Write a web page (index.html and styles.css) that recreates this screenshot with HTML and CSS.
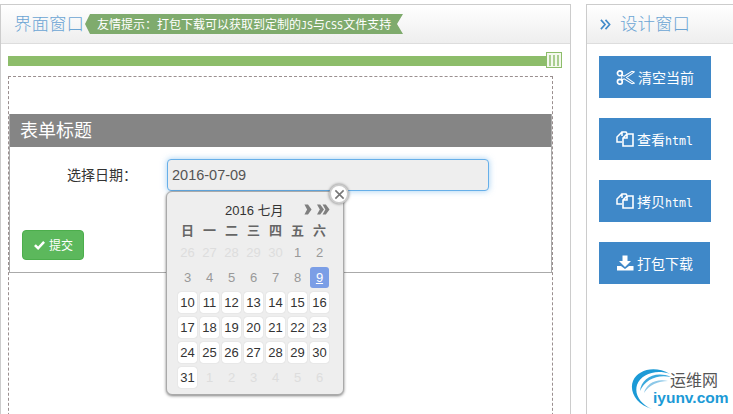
FILE: index.html
```html
<!DOCTYPE html>
<html lang="zh">
<head>
<meta charset="utf-8">
<title>界面窗口</title>
<link rel="stylesheet" href="styles.css">
</head>
<body>
<div class="page">
  <main class="panel main-panel">
    <header class="panel-head">
      <h2 class="panel-title">界面窗口</h2>
      <div class="ribbon">友情提示：打包下载可以获取到定制的<span class="mono-sm">JS</span>与<span class="mono-sm">CSS</span>文件支持</div>
    </header>
    <div class="panel-body">
      <div class="slider">
        <div class="slider-bar"></div>
        <div class="slider-handle"><i></i><i></i><i></i></div>
      </div>
      <div class="canvas">
        <section class="form-box">
          <h3 class="form-title">表单标题</h3>
          <div class="form-row">
            <label class="form-label">选择日期：</label>
            <div class="input">2016-07-09</div>
          </div>
          <div class="form-actions">
            <button class="submit">
              <svg class="check" viewBox="0 0 14 12" width="13" height="11"><path d="M1 6.5 L3 4.5 L5.5 7 L11 1 L13 3 L5.5 11 Z" fill="#fff"/></svg>
              <span>提交</span>
            </button>
          </div>
        </section>
      </div>
    </div>
    <div class="calendar">
      <div class="close">
        <svg viewBox="0 0 12 12" width="11" height="11"><path d="M1.5 1.5 L10.5 10.5 M10.5 1.5 L1.5 10.5" stroke="#777" stroke-width="1.7" fill="none"/></svg>
      </div>
      <div class="cal-title">
        <span class="cal-month">2016 七月</span>
        <span class="cal-nav">
          <svg viewBox="0 0 9 12" width="8" height="13"><path d="M0.5 0.5 H4.5 L8.5 6 L4.5 11.5 H0.5 L3.5 6 Z" fill="#7f7f7f"/></svg>
          <svg viewBox="0 0 14 12" width="13" height="13"><path d="M0 0.5 H3.5 L7.5 6 L3.5 11.5 H0 L3 6 Z M6 0.5 H9.5 L13.5 6 L9.5 11.5 H6 L9 6 Z" fill="#7f7f7f"/></svg>
        </span>
      </div>
      <div class="cal-week">
        <span>日</span><span>一</span><span>二</span><span>三</span><span>四</span><span>五</span><span>六</span>
      </div>
      <div class="cal-grid">
        <span class="off">26</span><span class="off">27</span><span class="off">28</span><span class="off">29</span><span class="off">30</span><span class="past">1</span><span class="past">2</span>
        <span class="past">3</span><span class="past">4</span><span class="past">5</span><span class="past">6</span><span class="past">7</span><span class="past">8</span><span class="today">9</span>
        <span class="day">10</span><span class="day">11</span><span class="day">12</span><span class="day">13</span><span class="day">14</span><span class="day">15</span><span class="day">16</span>
        <span class="day">17</span><span class="day">18</span><span class="day">19</span><span class="day">20</span><span class="day">21</span><span class="day">22</span><span class="day">23</span>
        <span class="day">24</span><span class="day">25</span><span class="day">26</span><span class="day">27</span><span class="day">28</span><span class="day">29</span><span class="day">30</span>
        <span class="day">31</span><span class="off">1</span><span class="off">2</span><span class="off">3</span><span class="off">4</span><span class="off">5</span><span class="off">6</span>
      </div>
    </div>
  </main>
  <aside class="panel side-panel">
    <header class="panel-head side-head">
      <svg class="chevrons" viewBox="0 0 12 12" width="11" height="11"><path d="M1 1 L5.5 6 L1 11 M6 1 L10.5 6 L6 11" stroke="#428bca" stroke-width="1.8" fill="none"/></svg>
      <h2 class="panel-title">设计窗口</h2>
    </header>
    <div class="side-body">
      <a class="tool">
        <svg class="tool-icon" viewBox="0 0 20 16" width="19" height="15"><circle cx="4" cy="3.5" r="2.6" fill="none" stroke="#fff" stroke-width="1.8"/><circle cx="4" cy="12.5" r="2.6" fill="none" stroke="#fff" stroke-width="1.8"/><path d="M6 5 L8.5 6.5 L17 1.5 L19.5 2 L11 8 L19.5 14 L17 14.5 L8.5 9.5 L6 11 Z" fill="none" stroke="#fff" stroke-width="1.1"/></svg>
        <span>清空当前</span>
      </a>
      <a class="tool">
        <svg class="tool-icon" viewBox="0 0 18 16" width="18" height="16"><path d="M6 5 V1 H10 L11 2.5 M6 1 L1 6 V11 H6" stroke="#fff" stroke-width="1.5" fill="none"/><path d="M7 15 V7 L11 3 H17 V15 Z M7 7 H11 V3" stroke="#fff" stroke-width="1.6" fill="none"/></svg>
        <span>查看<span class="mono">html</span></span>
      </a>
      <a class="tool">
        <svg class="tool-icon" viewBox="0 0 18 16" width="18" height="16"><path d="M6 5 V1 H10 L11 2.5 M6 1 L1 6 V11 H6" stroke="#fff" stroke-width="1.5" fill="none"/><path d="M7 15 V7 L11 3 H17 V15 Z M7 7 H11 V3" stroke="#fff" stroke-width="1.6" fill="none"/></svg>
        <span>拷贝<span class="mono">html</span></span>
      </a>
      <a class="tool tool-last">
        <svg class="tool-icon" viewBox="0 0 18 16" width="18" height="16"><path d="M6.5 0.5 H11.5 V6 H15 L9 12 L3 6 H6.5 Z" fill="#fff"/><path d="M1 11 H5 L9 14 L13 11 H17.5 V15.5 H1 Z" fill="#fff"/></svg>
        <span>打包下载</span>
      </a>
    </div>
  </aside>
  <div class="logo">
    <svg class="logo-mark" viewBox="0 0 50 44" width="50" height="44"><path d="M22 42 C6 38 -1 24 3 14 C8 3 24 -2 40 7 C26 2 11 7 7 18 C4 28 11 37 22 42 Z" fill="#1c9ad6"/><path d="M10 24 C11 12 25 3 41 10 C28 7 15 12 10 24 Z" fill="#3aa9dd"/><path d="M14 26 C16 17 26 11 38 14 C28 14 19 18 14 26 Z" fill="#8cc8e8"/></svg>
    <span class="logo-cn">运维网</span>
    <span class="logo-en">iyunv.com</span>
  </div>
</div>
</body>
</html>
```
FILE: styles.css
```css
* { box-sizing: border-box; }
html, body { margin: 0; padding: 0; height: 100%; overflow: hidden; background: #fff; }
body { font-family: "Noto Sans CJK SC", "Liberation Sans", sans-serif; position: relative; }
.page { display: flex; gap: 15px; padding-top: 4px; height: 414px; width: 733px; overflow: hidden; position: relative; }
.panel { border: 1px solid #ccc; border-bottom: 0; height: 420px; background: #fff; }
.main-panel { width: 571px; flex: none; position: relative; }
.side-panel { flex: none; width: 200px; }
.panel-head { height: 39px; display: flex; align-items: center; padding-left: 13px; border-bottom: 1px solid #ddd; background: linear-gradient(#fff, #eee); }
.panel-title { margin: 0 0 3px; font-size: 17.5px; line-height: 24px; font-weight: 300; color: #6ba5d4; white-space: nowrap; }
.ribbon { margin-left: 1px; width: 318px; height: 20px; padding-left: 12px; font-size: 12px; line-height: 20px; color: #fff; background: #7fab6d; white-space: nowrap; clip-path: polygon(0 50%, 5px 0, 100% 0, 312px 50%, 100% 100%, 5px 100%); }
.mono-sm { font-family: "DejaVu Sans Mono", monospace; font-size: 10px; }
.panel-body { padding: 8px 7px 0; }
.slider { height: 16px; position: relative; padding-top: 4px; }
.slider-bar { height: 10px; width: 538px; background: #8dbd6a; }
.slider-handle { position: absolute; left: 538px; top: 0; width: 16px; height: 16px; border: 1px solid #8dbd6a; background: #f4f8ee; display: flex; justify-content: center; gap: 2px; padding-top: 2px; }
.slider-handle i { width: 2px; height: 11px; background: #a9cd90; }
.canvas { margin-top: 8px; width: 545px; height: 360px; border: 1px dashed #9a8f8f; border-bottom: 0; padding-top: 37px; }
.form-box { height: 159px; border: 1px solid #aaa; border-top: 0; }
.form-title { margin: 0; height: 33px; padding-left: 10px; font-size: 18px; line-height: 30px; font-weight: 400; color: #fff; background: #858585; }
.form-row { display: flex; align-items: center; margin-top: 12px; height: 32px; }
.form-label { width: 157px; padding-left: 57px; padding-bottom: 2px; font-size: 14px; color: #333; flex: none; white-space: nowrap; }
.input { width: 322px; height: 32px; padding-left: 4px; border: 1px solid #66afe9; border-radius: 4px; background: #eee; box-shadow: 0 0 6px rgba(102,175,233,.6); font: 14.5px/30px "Liberation Sans", sans-serif; color: #555; }
.form-actions { margin-top: 39px; padding-left: 12px; }
.submit { width: 62px; height: 30px; border: 1px solid #4cae4c; border-radius: 4px; background: #5cb85c; color: #fff; font: 12px/28px "Noto Sans CJK SC", sans-serif; padding: 0; display: flex; align-items: center; justify-content: center; gap: 3px; }
.calendar { position: absolute; left: 165px; top: 186px; width: 178px; height: 204px; background: #eee; border: 1px solid #aaa; border-radius: 6px; box-shadow: 0 1px 3px rgba(0,0,0,.5); font-family: "Liberation Sans", "Noto Sans CJK SC", sans-serif; padding: 0 11px; }
.close { position: absolute; right: -6px; top: -8px; width: 20px; height: 20px; border-radius: 50%; border: 2px solid #ccc; background: #fff; box-shadow: 0 0 3px rgba(0,0,0,.5); display: flex; align-items: center; justify-content: center; }
.close svg { display: block; }
.cal-title { height: 33px; padding-top: 1px; display: flex; align-items: center; font-size: 13px; color: #333; }
.cal-month { margin-left: 47px; white-space: nowrap; }
.cal-nav { margin-left: 20px; display: flex; gap: 5px; align-items: center; }
.cal-week { display: grid; grid-template-columns: repeat(7, 19px); column-gap: 3px; height: 12px; align-items: center; justify-items: center; font-size: 13px; font-weight: 700; color: #666; line-height: 12px; }
.cal-grid { margin-top: 5px; display: grid; grid-template-columns: repeat(7, 19px); grid-auto-rows: 21px; gap: 4px 3px; font-size: 13px; line-height: 21px; text-align: center; }
.off { color: #ddd; }
.past { color: #999; }
.today { background: #7b9ee6; color: #fff; border-radius: 3px; text-decoration: underline; }
.day { background: #fff; color: #333; border-radius: 3px; box-shadow: 0 0 1px #bbb; }
.side-head { padding-left: 13px; gap: 9px; }
.chevrons { flex: none; }
.side-body { padding: 12px 12px 0; display: flex; flex-direction: column; gap: 20px; }
.tool { width: 112px; height: 42px; background: #3f88c8; color: #fff; font-size: 14px; display: flex; align-items: center; padding-left: 17px; white-space: nowrap; }
.tool-last { width: 111px; }
.tool-icon { flex: none; margin-right: 3px; }
.mono { font-family: "DejaVu Sans Mono", monospace; font-size: 11.6px; }
.logo { position: absolute; left: 630px; top: 367px; width: 103px; height: 47px; }
.logo-mark { position: absolute; left: 0; top: 0; }
.logo-cn { position: absolute; left: 40px; top: 3px; font-size: 16px; line-height: 18px; color: #555; }
.logo-en { position: absolute; left: 23px; top: 22px; font: 700 15.5px/18px "Liberation Sans", sans-serif; color: #1c9ad6; }
```
